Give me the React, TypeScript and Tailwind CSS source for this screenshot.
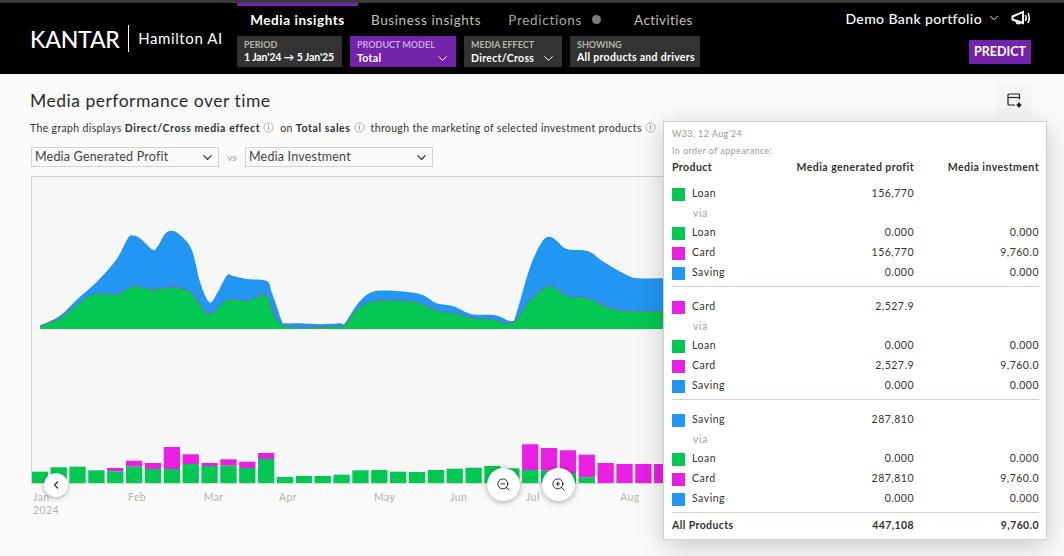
import React from 'react'
import { ChevronDown, ChevronLeft, ZoomIn, ZoomOut } from 'lucide-react'

type Point = [number, number]

const blueTop: Point[] = [
  [40, 326.7], [60, 316.7], [76.7, 300.7], [96.7, 283], [116.7, 260], [128, 239], [134, 236.7], [140, 239.3],
  [152.7, 250.7], [158, 246.7], [165, 235], [171.7, 231.7], [180, 236], [191.7, 250.7], [200, 283], [209.3, 303.3],
  [216.7, 295], [226.7, 276.7], [233, 277], [246.7, 280], [266.7, 282], [271.7, 293], [281.7, 321.7], [285, 324.3],
  [300, 324.3], [320, 325.3], [340, 324.3], [345, 324], [358.3, 304], [373.3, 292.7], [400, 292.3], [421.7, 295.7],
  [436.7, 304.3], [453.3, 307.3], [471.7, 315.3], [495, 316.3], [511.7, 322.3], [516.7, 313.3], [530, 268.3],
  [541.7, 243.3], [549.3, 237.7], [556.7, 241.7], [566.7, 250], [588.3, 252.3], [603.3, 262.7], [626.7, 276],
  [638.3, 279.3], [663.3, 279.3],
]

const greenTop: Point[] = [
  [40, 326.7], [58.3, 320], [71.7, 310], [93.3, 295], [116.7, 295], [133.3, 286.7], [150, 290], [170, 288.3],
  [180, 289], [191.7, 294], [209.3, 315], [226.7, 300.7], [248.3, 301.3], [266.7, 296.7], [283.3, 325.7],
  [340, 326.7], [345, 325], [358.3, 309.3], [375, 301.7], [410, 301.7], [420, 304], [438.3, 311.7], [455, 314],
  [473.3, 319], [493.3, 320], [511.7, 324], [530, 301.7], [549.3, 286.7], [566.7, 296.7], [588.3, 299],
  [606.7, 307.7], [626.7, 311.7], [663.3, 311.7],
]

// green top, magenta top (same value = no magenta part)
const bars: Point[] = [
  [472.7, 472.7], [468.3, 468.3], [467.7, 467.7], [471.3, 471.3], [472.3, 469], [467.7, 461.7], [470, 464],
  [470, 448], [465, 455.3], [467, 464], [466.7, 460.3], [469, 462.7], [460, 454], [478, 478], [477, 477],
  [477, 477], [475.7, 475.7], [471.3, 471.3], [471, 471], [472.7, 472.7], [473, 473], [471, 471], [469.7, 469.7],
  [468.7, 468.7], [467, 467], [469.3, 469.3], [471, 445.3], [471.7, 449], [474, 451.3], [478.3, 455.7],
  [484, 464], [484, 465], [484, 465], [484, 465],
]

const months = [
  { label: 'Jan', x: 33 },
  { label: 'Feb', x: 128 },
  { label: 'Mar', x: 203.7 },
  { label: 'Apr', x: 279 },
  { label: 'May', x: 374 },
  { label: 'Jun', x: 450 },
  { label: 'Jul', x: 526 },
  { label: 'Aug', x: 620 },
]

const smooth = (pts: Point[]) => {
  let d = `M${pts[0][0]} ${pts[0][1]}`
  for (let i = 0; i < pts.length - 1; i++) {
    const p0 = pts[Math.max(i - 1, 0)]
    const p1 = pts[i]
    const p2 = pts[i + 1]
    const p3 = pts[Math.min(i + 2, pts.length - 1)]
    const c1x = p1[0] + (p2[0] - p0[0]) / 6
    const c1y = p1[1] + (p2[1] - p0[1]) / 6
    const c2x = p2[0] - (p3[0] - p1[0]) / 6
    const c2y = p2[1] - (p3[1] - p1[1]) / 6
    d += ` C${c1x.toFixed(1)} ${c1y.toFixed(1)} ${c2x.toFixed(1)} ${c2y.toFixed(1)} ${p2[0]} ${p2[1]}`
  }
  return d
}

const colors: Record<string, string> = {
  Loan: 'bg-[#00c853]',
  Card: 'bg-[#e91fe3]',
  Saving: 'bg-[#2196f3]',
}

const groups = [
  { name: 'Loan', total: '156,770', rows: [['Loan', '0.000', '0.000'], ['Card', '156,770', '9,760.0'], ['Saving', '0.000', '0.000']] },
  { name: 'Card', total: '2,527.9', rows: [['Loan', '0.000', '0.000'], ['Card', '2,527.9', '9,760.0'], ['Saving', '0.000', '0.000']] },
  { name: 'Saving', total: '287,810', rows: [['Loan', '0.000', '0.000'], ['Card', '287,810', '9,760.0'], ['Saving', '0.000', '0.000']] },
]

const InfoDot = () => (
  <svg className="inline-block w-[11px] h-[11px] mx-[3px] align-[-1px]" viewBox="0 0 11 11" fill="none" stroke="#a3a297">
    <circle cx="5.5" cy="5.5" r="4.6" strokeWidth="0.8" />
    <path d="M5.5 3v5" strokeWidth="1" />
  </svg>
)

const Filter = ({ label, value, width, active, chevron, tight }: { label: string; value: string; width: string; active?: boolean; chevron?: boolean; tight?: boolean }) => (
  <div className={`${width} h-[31px] px-[7px] pt-[3px] ${active ? 'bg-[#7223a8]' : 'bg-[#333333]'}`}>
    <div className={`text-[9px] leading-[12px] font-bold ${active ? 'text-[#c9a6e2]' : 'text-[#b4b4ac]'}`}>{label}</div>
    <div className={`flex items-center justify-between text-[10.5px] leading-[13px] font-bold text-white whitespace-nowrap ${tight ? 'tracking-[-0.1px]' : 'tracking-[0.3px]'}`}>
      <span>{value}</span>
      {chevron && <ChevronDown className="w-[15px] h-[15px] -mr-[1px] text-white" strokeWidth={1.6} />}
    </div>
  </div>
)

const Select = ({ value, width }: { value: string; width: string }) => (
  <div className={`${width} h-[20px] border border-[#d4d3c6] flex items-center justify-between pl-[3px] pr-[3px] text-[12.5px] tracking-[0.2px] text-[#44443f]`}>
    <span>{value}</span>
    <ChevronDown className="w-[15px] h-[15px] text-[#222]" strokeWidth={1.8} />
  </div>
)

const Row = ({ name, a, b }: { name: string; a?: string; b?: string }) => (
  <div className="grid grid-cols-[120px_122px_125px] h-[20px] items-center text-[10.5px] tracking-[0.5px] text-[#33332f]">
    <div className="flex items-center gap-[7px]">
      <span className={`w-[13px] h-[13px] ${colors[name]}`} />
      <span>{name}</span>
    </div>
    <div className="text-right -mt-[1px]">{a}</div>
    <div className="text-right -mt-[1px]">{b}</div>
  </div>
)

export default function App() {
  const blueArea = `${smooth(blueTop)} L663.3 330 L40 330 Z`
  const greenArea = `${smooth(greenTop)} L663.3 330 L40 330 Z`

  return (
    <div className="relative w-[1064px] h-[556px] overflow-hidden bg-[#fafafa] font-['Lato','Liberation_Sans',sans-serif]">
      {/* Header */}
      <header className="h-[74px] bg-black border-t-[3px] border-[#3a3a3a] flex">
        <div className="w-[237px] pl-[30px] pt-[22px] flex items-start">
          <span className="text-[23px] leading-[28px] text-white tracking-[-0.2px] font-medium">KANTAR</span>
          <span className="w-[1.5px] h-[27px] bg-white ml-[8px] mr-[9px]" />
          <span className="text-[15px] leading-[26px] text-white tracking-[0.6px]">Hamilton AI</span>
        </div>

        <div>
          <nav className="h-[33px] flex text-[13.5px] tracking-[0.7px]">
            <div className="w-[121px] h-[33px] border-t-[3px] border-[#7223a8] text-center pt-[4px] text-white font-bold tracking-[0.55px]">Media insights</div>
            <div className="ml-[13px] pt-[7px] text-[#c0c0b8] tracking-[0.6px]">Business insights</div>
            <div className="ml-[27px] pt-[7px] text-[#a8a8a0] flex items-start">
              Predictions
              <span className="w-[9px] h-[9px] rounded-full bg-[#7d7d7d] ml-[10px] mt-[5px]" />
            </div>
            <div className="ml-[33px] pt-[7px] text-[#c0c0b8] tracking-[0.4px]">Activities</div>
          </nav>
          <div className="flex gap-[8px]">
            <Filter label="PERIOD" value="1 Jan'24 → 5 Jan'25" width="w-[105px]" tight />
            <Filter label="PRODUCT MODEL" value="Total" width="w-[106px]" active chevron />
            <Filter label="MEDIA EFFECT" value="Direct/Cross" width="w-[98px]" chevron />
            <Filter label="SHOWING" value="All products and drivers" width="w-[130px]" />
          </div>
        </div>

        <div className="ml-auto pr-[33px] flex flex-col items-end">
          <div className="flex items-center h-[30px] text-[14px] tracking-[0.4px] text-white font-medium">
            <span>Demo Bank portfolio</span>
            <ChevronDown className="w-[14px] h-[14px] ml-[5px] mr-[10px]" strokeWidth={1.6} />
            <svg className="w-[20px] h-[16px]" viewBox="0 0 20 16" fill="none" stroke="white" strokeWidth="2">
              <path d="M1.5 6.5 L12 2 V13 L1.5 9.5 Z" />
              <path d="M4.5 10 L6 13.5 H8.5 L7.5 11" strokeWidth="1.5" />
              <path d="M14.5 5 Q16 8 14.5 11" strokeWidth="1.6" />
              <path d="M17 3 Q19.5 8 17 13" strokeWidth="1.6" />
            </svg>
          </div>
          <div className="mt-[7px] w-[62px] h-[24px] bg-[#7223a8] text-white text-[12.5px] font-bold flex items-center justify-center">PREDICT</div>
        </div>
      </header>

      {/* Page content */}
      <main className="pl-[30px]">
        <div className="flex items-start justify-between pr-[33px] pt-[10px] h-[43px]">
          <h1 className="text-[17.5px] leading-[33px] tracking-[0.5px] text-[#2b2b28] font-normal">Media performance over time</h1>
          <div className="w-[34px] h-[33px] bg-[#f5f5f5] flex items-center justify-center">
            <svg className="w-[17px] h-[17px]" viewBox="0 0 17 17" fill="none" stroke="#222" strokeWidth="1.2">
              <path d="M13.5 7.5 V3 a1 1 0 0 0 -1 -1 H3 a1 1 0 0 0 -1 1 V12 a1 1 0 0 0 1 1 H9" />
              <path d="M2 5.5 H13.5" />
              <circle cx="13" cy="13" r="1.6" fill="#222" strokeWidth="1" />
              <path d="M13 10.2 V15.8 M10.4 13 H15.6" strokeWidth="0.9" />
            </svg>
          </div>
        </div>

        <p className="mt-[4px] h-[14px] text-[10.5px] leading-[14px] tracking-[0.35px] text-[#33332f] whitespace-nowrap">
          The graph displays <b className="tracking-[0.6px]">Direct/Cross media effect</b>
          <InfoDot /> on <b className="tracking-[0.6px]">Total sales</b>
          <InfoDot /> through the marketing of selected investment products
          <InfoDot />
        </p>

        <div className="mt-[12px] ml-[1px] flex items-center">
          <Select value="Media Generated Profit" width="w-[188px]" />
          <span className="w-[26px] text-center text-[10px] text-[#a3a297]">vs</span>
          <Select value="Media Investment" width="w-[188px]" />
        </div>

        {/* Chart */}
        <div className="mt-[9px] ml-[1px] w-[940px] border-t border-l border-[#d4d3c6] bg-[#f7f7f7]">
          <svg className="block" width="939" height="307" viewBox="32 178 939 307">
            <path d={blueArea} fill="#2196f3" />
            <path d={greenArea} fill="#00c853" />
            <path d={smooth(greenTop)} fill="none" stroke="#e91fe3" strokeWidth="1" opacity="0.55" />
            {bars.map(([green, magenta], i) => {
              const x = 31.7 + i * 18.86
              return (
                <g key={i}>
                  {magenta < green && <rect x={x} y={magenta} width="16.3" height={green - magenta} fill="#e91fe3" />}
                  {green < 484 && <rect x={x} y={green} width="16.3" height={484 - green} fill="#00c853" />}
                </g>
              )
            })}
            <path d="M32 484.5 H664" stroke="#dcdcd2" strokeWidth="1" />
          </svg>
        </div>
        <div className="ml-[1px]">
          <svg className="block" width="700" height="34" viewBox="31 485 700 34">
            {months.map((m) => (
              <text key={m.label} x={m.x} y="502" fontSize="10.5" fill="#b5b4a8" letterSpacing="0.4">{m.label}</text>
            ))}
            <text x="33" y="515" fontSize="10.5" fill="#b5b4a8" letterSpacing="0.4">2024</text>
          </svg>
        </div>
      </main>

      {/* Chart navigation buttons */}
      <button className="absolute left-[44px] top-[473px] w-[24px] h-[24px] rounded-full bg-white shadow-[0_1px_5px_rgba(0,0,0,0.35)] flex items-center justify-center">
        <ChevronLeft className="w-[12px] h-[12px] text-[#333]" strokeWidth={2.5} />
      </button>
      <button className="absolute left-[487px] top-[468px] w-[33px] h-[33px] rounded-full bg-white shadow-[0_1px_6px_rgba(0,0,0,0.35)] flex items-center justify-center">
        <ZoomOut className="w-[15px] h-[15px] text-[#222]" strokeWidth={1.5} />
      </button>
      <button className="absolute left-[542px] top-[468px] w-[33px] h-[33px] rounded-full bg-white shadow-[0_1px_6px_rgba(0,0,0,0.35)] flex items-center justify-center">
        <ZoomIn className="w-[15px] h-[15px] text-[#222]" strokeWidth={1.5} />
      </button>

      {/* Tooltip */}
      <div className="absolute left-[663px] top-[121px] w-[384px] h-[419px] bg-white border border-[#cfcfcf] shadow-[0_6px_26px_rgba(0,0,0,0.2)] pl-[8px] pt-[5px]">
        <div className="h-[14px] text-[9px] leading-[14px] tracking-[0.4px] text-[#9a9a8e]">W33, 12 Aug'24</div>
        <div className="mt-[3px] h-[14px] text-[9px] leading-[14px] tracking-[0.4px] text-[#9a9a8e]">In order of appearance:</div>
        <div className="mt-[2px] grid grid-cols-[120px_122px_125px] h-[15px] items-center text-[10.5px] font-bold tracking-[0.45px] text-[#33332f]">
          <span>Product</span>
          <span className="text-right whitespace-nowrap">Media generated profit</span>
          <span className="text-right whitespace-nowrap">Media investment</span>
        </div>

        <div className="mt-[9px] w-[367px]">
          {groups.map((g, i) => (
            <div key={g.name} className={`pb-[3px] border-b border-[#d4d3c6] ${i < 2 ? 'mb-[10px]' : ''}`}>
              <Row name={g.name} a={g.total} />
              <div className="h-[19px] pl-[21px] flex items-center text-[10.5px] tracking-[0.5px] text-[#a3a297]">via</div>
              {g.rows.map((r) => (
                <Row key={r[0]} name={r[0]} a={r[1]} b={r[2]} />
              ))}
            </div>
          ))}
          <div className="grid grid-cols-[120px_122px_125px] h-[26px] items-center text-[10.5px] font-bold tracking-[0.4px] text-[#33332f]">
            <span>All Products</span>
            <span className="text-right">447,108</span>
            <span className="text-right">9,760.0</span>
          </div>
        </div>
      </div>
    </div>
  )
}
